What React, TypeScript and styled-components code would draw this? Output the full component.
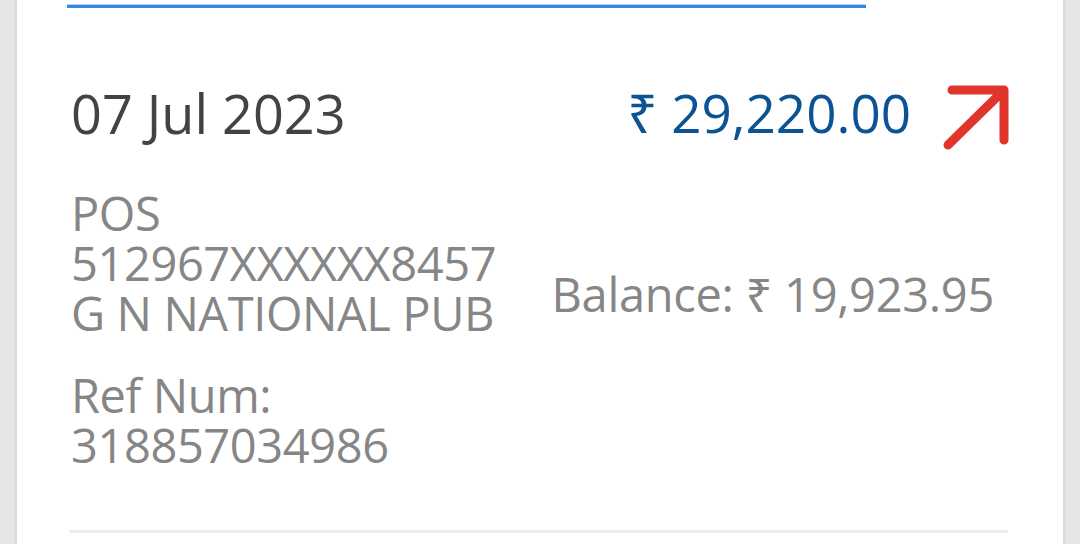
import React from 'react';
import styled, { createGlobalStyle } from 'styled-components';

const colors = {
  page: '#e6e6e6',
  edge: '#dcdcdc',
  card: '#ffffff',
  blue: '#0b5394',
  accent: '#3b86e0',
  accentLight: '#a9d4fb',
  dark: '#434343',
  muted: '#868686',
  red: '#e0352b',
  divider: '#ececec'
};

const GlobalStyle = createGlobalStyle`
  html, body {
    margin: 0;
    padding: 0;
    background: ${colors.page};
  }
  body {
    font-family: 'Open Sans', 'Noto Sans', sans-serif;
    overflow: hidden;
  }
`;

const Page = styled.div`
  height: 544px;
  padding: 0 14px;
  display: flex;
`;

const Card = styled.div`
  flex: 1;
  background: ${colors.card};
  border-left: 3px solid ${colors.edge};
  border-right: 3px solid ${colors.edge};
  padding: 4px 55px 0 54px;
  display: flex;
  flex-direction: column;
`;

const TabLine = styled.div`
  width: 799px;
  height: 3px;
  margin-left: -4px;
  background: ${colors.accent};
  border-top: 1px solid ${colors.accentLight};
`;

const HeaderRow = styled.div`
  margin-top: 74px;
  display: flex;
  align-items: center;
  justify-content: space-between;
  height: 62px;
`;

const DateText = styled.div`
  font-size: 54px;
  line-height: 62px;
  color: ${colors.dark};
`;

const AmountBox = styled.div`
  display: flex;
  align-items: center;
  gap: 28px;
`;

const Amount = styled.div`
  font-size: 53px;
  line-height: 62px;
  color: ${colors.blue};
`;

const Arrow = styled.svg`
  width: 72px;
  height: 68px;
  margin-top: 6px;
  margin-right: -3px;
`;

const Body = styled.div`
  margin-top: 44px;
  display: flex;
  justify-content: space-between;
  align-items: flex-start;
`;

const Details = styled.div`
  display: flex;
  flex-direction: column;
  gap: 32px;
`;

const Block = styled.div`
  font-size: 47px;
  line-height: 50px;
  color: ${colors.muted};
  letter-spacing: -0.4px;
`;

const Balance = styled.div`
  margin-top: 81px;
  margin-right: 14px;
  font-size: 47px;
  line-height: 50px;
  color: ${colors.muted};
  letter-spacing: -0.3px;
`;

const Divider = styled.div`
  margin-top: 60px;
  height: 3px;
  margin-left: -2px;
  background: ${colors.divider};
  border-radius: 2px;
`;

export default function App() {
  return (
    <>
      <GlobalStyle />
      <Page>
        <Card>
          <TabLine />
          <HeaderRow>
            <DateText>07 Jul 2023</DateText>
            <AmountBox>
              <Amount>₹ 29,220.00</Amount>
              <Arrow viewBox="0 0 72 68">
                <path
                  d="M9 63 L65 8 M13 8 L65 8 L65 58"
                  fill="none"
                  stroke={colors.red}
                  strokeWidth="9"
                  strokeLinecap="round"
                  strokeLinejoin="round"
                />
              </Arrow>
            </AmountBox>
          </HeaderRow>
          <Body>
            <Details>
              <Block>
                POS
                <br />
                512967XXXXXX8457
                <br />G N NATIONAL PUB
              </Block>
              <Block>
                Ref Num:
                <br />
                318857034986
              </Block>
            </Details>
            <Balance>Balance: ₹ 19,923.95</Balance>
          </Body>
          <Divider />
        </Card>
      </Page>
    </>
  );
}
